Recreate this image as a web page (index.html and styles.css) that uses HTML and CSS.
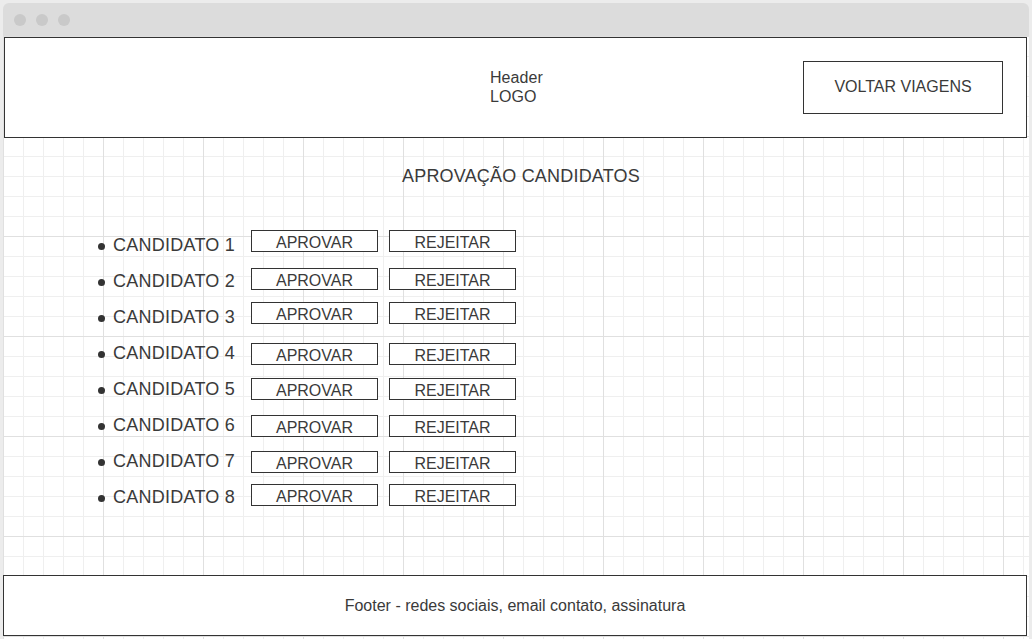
FILE: index.html
```html
<!DOCTYPE html>
<html lang="pt">
<head>
<meta charset="utf-8">
<title>Aprovação Candidatos</title>
<link rel="stylesheet" href="styles.css">
</head>
<body>
<div class="window">
  <div class="titlebar">
    <span class="dot"></span><span class="dot"></span><span class="dot"></span>
  </div>
  <div class="canvas">
    <header class="site-header">
      <div class="header-side"></div>
      <div class="logo">Header<br>LOGO</div>
      <div class="header-side header-side--right">
        <button class="back-btn">VOLTAR VIAGENS</button>
      </div>
    </header>

    <h1 class="page-title">APROVAÇÃO CANDIDATOS</h1>

    <ul class="candidates">
      <li class="candidate off-3"><span class="name">CANDIDATO 1</span><div class="actions"><button class="act">APROVAR</button><button class="act">REJEITAR</button></div></li>
      <li class="candidate off-5"><span class="name">CANDIDATO 2</span><div class="actions"><button class="act">APROVAR</button><button class="act">REJEITAR</button></div></li>
      <li class="candidate off-3"><span class="name">CANDIDATO 3</span><div class="actions"><button class="act">APROVAR</button><button class="act">REJEITAR</button></div></li>
      <li class="candidate off-8"><span class="name">CANDIDATO 4</span><div class="actions"><button class="act">APROVAR</button><button class="act">REJEITAR</button></div></li>
      <li class="candidate off-7"><span class="name">CANDIDATO 5</span><div class="actions"><button class="act">APROVAR</button><button class="act">REJEITAR</button></div></li>
      <li class="candidate off-8"><span class="name">CANDIDATO 6</span><div class="actions"><button class="act">APROVAR</button><button class="act">REJEITAR</button></div></li>
      <li class="candidate off-8"><span class="name">CANDIDATO 7</span><div class="actions"><button class="act">APROVAR</button><button class="act">REJEITAR</button></div></li>
      <li class="candidate off-5"><span class="name">CANDIDATO 8</span><div class="actions"><button class="act">APROVAR</button><button class="act">REJEITAR</button></div></li>
    </ul>

    <footer class="site-footer">Footer - redes sociais, email contato, assinatura</footer>
  </div>
</div>
</body>
</html>
```

FILE: styles.css
```css
* { box-sizing: border-box; }

html, body {
  margin: 0;
  padding: 0;
  height: 100%;
  overflow: hidden;
}

body {
  background: #ececec;
  font-family: "Liberation Sans", Arial, sans-serif;
  color: #3a3a3a;
}

.window {
  margin: 3px 3px 0 3px;
  width: 1026px;
}

.titlebar {
  height: 33px;
  background: #dcdcdc;
  border-radius: 6px 6px 0 0;
  display: flex;
  align-items: center;
  gap: 10px;
  padding: 0 0 0 11px;
}

.dot {
  width: 12px;
  height: 12px;
  border-radius: 50%;
  background: #c9c9c9;
}

.canvas {
  height: 603px;
  display: flex;
  flex-direction: column;
  padding-top: 1px;
  background-color: #ffffff;
  background-image:
    linear-gradient(to right, #e0e0e0 1px, transparent 1px),
    linear-gradient(to bottom, #e0e0e0 1px, transparent 1px),
    linear-gradient(to right, #efefef 1px, transparent 1px),
    linear-gradient(to bottom, #efefef 1px, transparent 1px);
  background-size: 100px 100px, 100px 100px, 20px 20px, 20px 20px;
}

.site-header {
  margin-left: 1px;
  width: 1023px;
  height: 101px;
  background: #ffffff;
  border: 1px solid #333333;
  display: grid;
  grid-template-columns: 1fr auto 1fr;
  align-items: center;
}

.logo {
  font-size: 16px;
  line-height: 19px;
  text-align: left;
  padding: 0 0 2px 2px;
  letter-spacing: 0.1px;
}

.header-side--right {
  display: flex;
  justify-content: flex-end;
  padding-right: 23px;
}

.back-btn {
  width: 200px;
  height: 53px;
  background: #ffffff;
  border: 1px solid #333333;
  font-family: "Liberation Sans", Arial, sans-serif;
  font-size: 16px;
  color: #3a3a3a;
  padding: 0 0 2px 0;
  margin: 0;
}

.page-title {
  margin: 28px 0 0 0;
  padding-left: 10px;
  font-size: 18px;
  line-height: 21px;
  font-weight: normal;
  letter-spacing: 0.2px;
  text-align: center;
}

.candidates {
  list-style: none;
  margin: 40px 0 0 95px;
  padding: 0;
}

.candidate {
  display: flex;
  align-items: flex-start;
  height: 36px;
}

.name {
  display: flex;
  align-items: center;
  gap: 8px;
  width: 153px;
  font-size: 18px;
  line-height: 36px;
  letter-spacing: 0.25px;
}

.name::before {
  content: "";
  width: 7px;
  height: 7px;
  border-radius: 50%;
  background: #333333;
  margin-top: 2px;
}

.actions {
  display: flex;
  gap: 11px;
}

.off-3 .actions { margin-top: 3px; }
.off-5 .actions { margin-top: 5px; }
.off-7 .actions { margin-top: 7px; }
.off-8 .actions { margin-top: 8px; }

.act {
  width: 127px;
  height: 22px;
  padding: 3px 0 0 0;
  margin: 0;
  line-height: 17px;
  background: #ffffff;
  border: 1px solid #333333;
  font-family: "Liberation Sans", Arial, sans-serif;
  font-size: 16px;
  color: #3a3a3a;
}

.site-footer {
  margin-top: auto;
  margin-bottom: 3px;
  width: 1024px;
  height: 61px;
  background: #ffffff;
  border: 1px solid #333333;
  display: flex;
  align-items: center;
  justify-content: center;
  font-size: 16px;
}
```
